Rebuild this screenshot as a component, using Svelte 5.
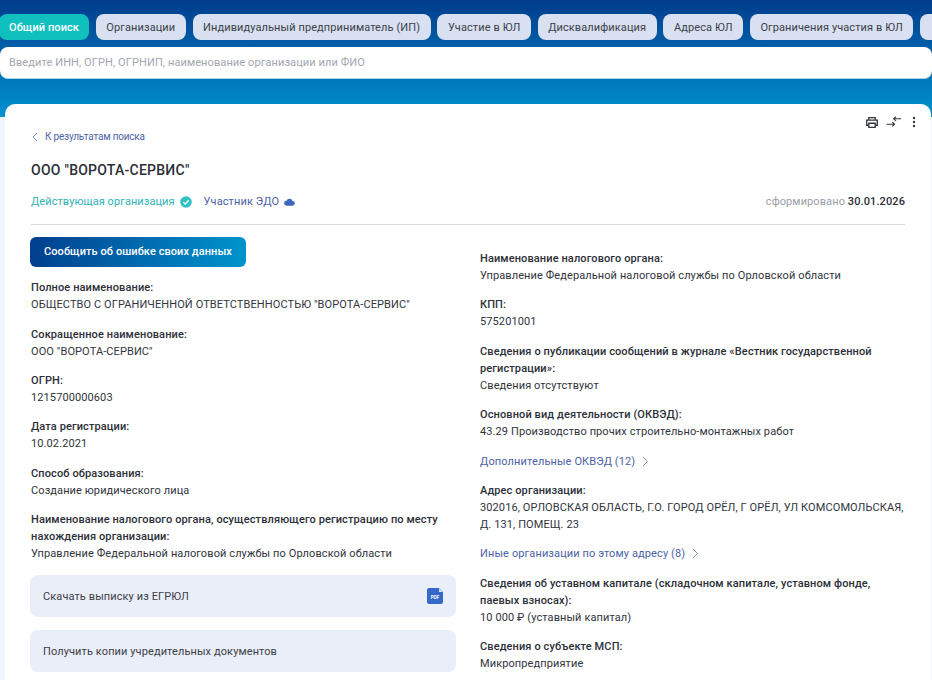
<script>
  const tabs = ['Организации','Индивидуальный предприниматель (ИП)','Участие в ЮЛ','Дисквалификация','Адреса ЮЛ','Ограничения участия в ЮЛ',''];
</script>

<div class="page">
  <header class="hero">
    <nav class="tabs">
      <span class="tab active">Общий поиск</span>
      {#each tabs as t}<span class="tab">{t}</span>{/each}
    </nav>
    <div class="search">Введите ИНН, ОГРН, ОГРНИП, наименование организации или ФИО</div>
  </header>

  <main class="card">
    <div class="tools">
      <svg width="12" height="11" viewBox="0 0 13 12" fill="none" stroke="#30343c" stroke-width="1.400"><path d="M3 3.200V.7h7v2.500M3 9H.7V3.400h11.600V9H10"/><path d="M3 6.800h7v4.500H3z"/></svg>
      <svg width="15" height="12" viewBox="0 0 15 12" fill="none" stroke="#30343c" stroke-width="1.100"><path d="M15 2.800H7.500M10 .7 7.600 2.800 10 4.900M.5 8.200h8M6.200 6l2.400 2.200-2.400 2.200"/></svg>
      <svg class="dots" width="4" height="12" viewBox="0 0 4 12" fill="#30343c"><circle cx="2" cy="2" r="1.200"/><circle cx="2" cy="6" r="1.200"/><circle cx="2" cy="10" r="1.200"/></svg>
    </div>

    <a class="back"><svg width="6" height="10" viewBox="0 0 6 10" fill="none" stroke="#7d93c4" stroke-width="1"><path d="M5 1 1 5l4 4"/></svg>К результатам поиска</a>
    <h1>ООО "ВОРОТА-СЕРВИС"</h1>

    <div class="status">
      <span class="active-org">Действующая организация</span>
      <svg class="check" width="12" height="12" viewBox="0 0 12 12"><circle cx="6" cy="6" r="5.800" fill="#2fbfc4"/><path d="M3.200 6.100 5.200 8l3.600-3.800" fill="none" stroke="#fff" stroke-width="1.300"/></svg>
      <span class="edo">Участник ЭДО</span>
      <svg width="11" height="8" viewBox="0 0 12 8" fill="#3f67bd"><path d="M3 8a2.700 2.700 0 0 1-.4-5.400A3.600 3.600 0 0 1 9.300 2.800 2.600 2.600 0 0 1 9.200 8z"/></svg>
      <span class="formed">сформировано <b>30.01.2026</b></span>
    </div>

    <div class="columns">
      <section class="col">
        <button class="report">Сообщить об ошибке своих данных</button>
        <dl>
          <div><dt>Полное наименование:</dt><dd>ОБЩЕСТВО С ОГРАНИЧЕННОЙ ОТВЕТСТВЕННОСТЬЮ "ВОРОТА-СЕРВИС"</dd></div>
          <div><dt>Сокращенное наименование:</dt><dd>ООО "ВОРОТА-СЕРВИС"</dd></div>
          <div><dt>ОГРН:</dt><dd>1215700000603</dd></div>
          <div><dt>Дата регистрации:</dt><dd>10.02.2021</dd></div>
          <div><dt>Способ образования:</dt><dd>Создание юридического лица</dd></div>
          <div><dt>Наименование налогового органа, осуществляющего регистрацию по месту нахождения организации:</dt><dd>Управление Федеральной налоговой службы по Орловской области</dd></div>
        </dl>
        <div class="action first">Скачать выписку из ЕГРЮЛ
          <svg width="16" height="16" viewBox="0 0 16 16"><path d="M2 0h10l4 4v10a2 2 0 0 1-2 2H2a2 2 0 0 1-2-2V2a2 2 0 0 1 2-2z" fill="#3568c8"/><path d="M12 0v4h4z" fill="#cfdcf3"/><text x="8" y="11" text-anchor="middle" font-size="4.500" font-weight="700" fill="#fff" font-family="Roboto">PDF</text></svg>
        </div>
        <div class="action second">Получить копии учредительных документов</div>
      </section>

      <section class="col right">
        <dl>
          <div><dt>Наименование налогового органа:</dt><dd>Управление Федеральной налоговой службы по Орловской области</dd></div>
          <div><dt>КПП:</dt><dd>575201001</dd></div>
          <div><dt>Сведения о публикации сообщений в журнале «Вестник государственной регистрации»:</dt><dd>Сведения отсутствуют</dd></div>
          <div><dt>Основной вид деятельности (ОКВЭД):</dt><dd>43.29 Производство прочих строительно-монтажных работ</dd></div>
          <a class="more">Дополнительные ОКВЭД (12)<svg width="7" height="11" viewBox="0 0 7 11" fill="none" stroke="#7d93c4"><path d="m1 1 4.500 4.500L1 10"/></svg></a>
          <div><dt>Адрес организации:</dt><dd>302016, ОРЛОВСКАЯ ОБЛАСТЬ, Г.О. ГОРОД ОРЁЛ, Г ОРЁЛ, УЛ КОМСОМОЛЬСКАЯ, Д. 131, ПОМЕЩ. 23</dd></div>
          <a class="more">Иные организации по этому адресу (8)<svg width="7" height="11" viewBox="0 0 7 11" fill="none" stroke="#7d93c4"><path d="m1 1 4.500 4.500L1 10"/></svg></a>
          <div><dt>Сведения об уставном капитале (складочном капитале, уставном фонде, паевых взносах):</dt><dd>10 000 ₽ (уставный капитал)</dd></div>
          <div><dt>Сведения о субъекте МСП:</dt><dd>Микропредприятие</dd></div>
        </dl>
      </section>
    </div>
  </main>
</div>

<style>
  :global(body) { margin: 0; background: #f1f5fc; overflow: hidden; }
  .page { width: 932px; height: 680px; overflow: hidden; position: relative; font-family: Roboto, sans-serif; font-size: 11px; line-height: 17px; color: #30343c; }
  .hero { height: 117px; box-sizing: border-box; padding-top: 14px; background: linear-gradient(180deg, #003c8c 0%, #0093cf 100%); }
  .tabs { display: flex; gap: 6.800px; margin-left: -1px; width: 1000px; }
  .tab { flex: none; height: 26px; box-sizing: border-box; padding: 0 10.500px; min-width: 40px; display: flex; align-items: center; border-radius: 8px; background: #d8e0f1; color: #3d4048; letter-spacing: .1px; }
  .tab.active { background: #0fc0bf; color: #fff; font-weight: 500; padding: 0 10px; letter-spacing: .08px; }
  .search { margin-top: 7px; height: 32px; box-sizing: border-box; padding: 0 9px; display: flex; align-items: center; background: #fff; border-radius: 8px; border-bottom: 1px solid #a8d4ee; color: #a2a6b0; letter-spacing: .1px; }
  .card { position: relative; margin: -13px 1px 0 5px; height: 600px; box-sizing: border-box; padding: 24px 26px 0; background: #fff; border-radius: 10px 10px 0 0; }
  .tools { position: absolute; top: 12px; right: 15px; display: flex; gap: 8px; align-items: center; }
  .dots { margin-left: 3px; }
  .back { display: flex; align-items: center; gap: 7px; margin-left: 1px; height: 17px; color: #4f63a8; font-size: 10px; letter-spacing: -.2px; }
  h1 { margin: 15px 0 0; font-size: 14px; line-height: 20px; font-weight: 500; color: #2b2f38; letter-spacing: .25px; }
  .status { display: flex; align-items: center; margin-top: 13px; padding-bottom: 14px; border-bottom: 1px solid #d8dbe0; height: 17px; }
  .active-org { color: #2fb3b5; letter-spacing: .07px; }
  .check { margin-left: 5px; }
  .edo { color: #4c62a8; margin: 0 5px 0 12px; letter-spacing: .12px; }
  .formed { margin-left: auto; color: #9a9ea8; letter-spacing: .1px; }
  .formed b { color: #2b2f38; font-weight: 500; }
  .columns { display: grid; grid-template-columns: 426px 426px; column-gap: 24px; margin-top: 12px; margin-left: -1px; }
  .right { padding-top: 13.100px; }
  .report { display: block; width: 216px; height: 30px; padding: 0; border: 0; border-radius: 6px; font: 500 11px/30px Roboto, sans-serif; color: #fff; letter-spacing: .07px; background: linear-gradient(90deg, #003f8e, #0094cd); }
  dl { margin: 0; display: flex; flex-direction: column; gap: 12.400px; }
  .col > dl { margin: 12.300px 0 0 1px; }
  .right > dl { margin: 0; }
  dt { font-weight: 500; color: #2b2f38; letter-spacing: .11px; }
  dd { margin: 0; letter-spacing: .1px; }
  .more { display: flex; align-items: center; gap: 7px; color: #4c62a8; letter-spacing: .12px; height: 17px; }
  .action { display: flex; justify-content: space-between; align-items: center; height: 42px; box-sizing: border-box; padding: 0 13px; border-radius: 8px; background: #e9eef9; color: #3d4048; letter-spacing: .1px; margin-top: 13px; }
  .action.first { margin-top: 13px; }
  .action.second { padding-top: 1px; }
</style>
